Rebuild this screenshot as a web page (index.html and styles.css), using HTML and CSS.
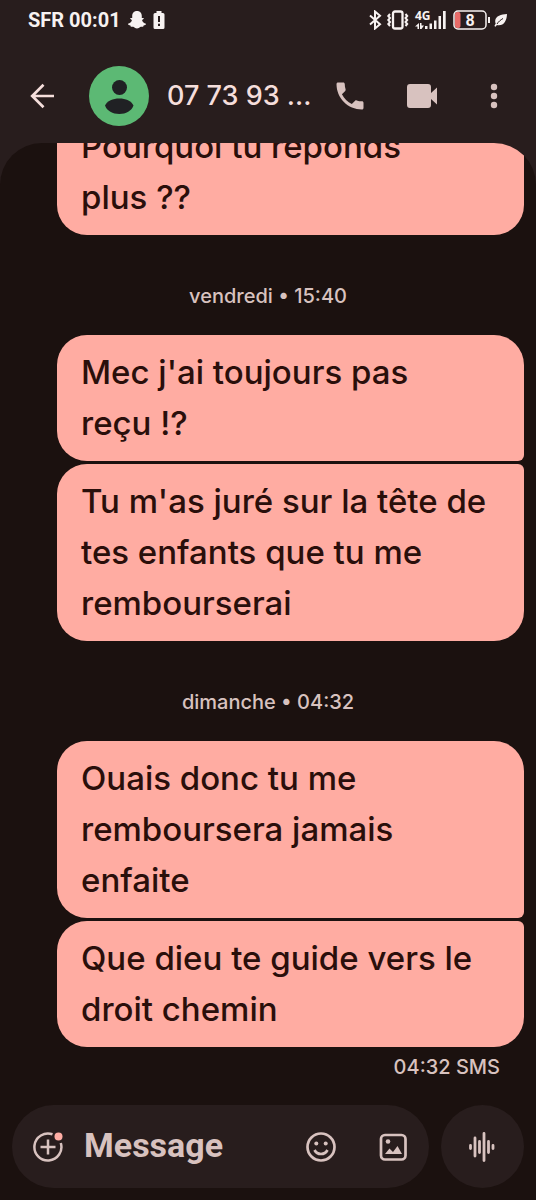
FILE: index.html
```html
<!DOCTYPE html>
<html lang="fr">
<head>
<meta charset="utf-8">
<meta name="viewport" content="width=device-width, initial-scale=1">
<title>Messages</title>
<link rel="stylesheet" href="styles.css">
</head>
<body>
<div class="app">
  <div class="status">
    <span>SFR 00:01</span>
    <svg width="20" height="20" viewBox="0 0 20 20" fill="currentColor"><path d="M10 1c3.200 0 4.800 2.200 4.800 5v2c.8 0 1.700-.3 2 .3.300.8-1.500 1.300-1.700 2 .4 1.700 2 3 3.900 3.500.2 1.200-1.500 1.300-2.400 1.600-.3.500-.2 1.300-.8 1.400-.9.100-1.700-.2-2.600.3-.9.600-1.700 1.400-3.200 1.400s-2.300-.8-3.200-1.400c-.9-.5-1.700-.2-2.600-.3-.6-.1-.5-.9-.8-1.400C2.500 15.100.8 15 1 13.800 2.900 13.300 4.500 12 4.900 10.300c-.2-.7-2-1.200-1.700-2 .3-.6 1.200-.3 2-.3V6c0-2.800 1.600-5 4.800-5z"/></svg>
    <svg width="12" height="20" viewBox="0 0 12 20"><path fill="currentColor" d="M3.500 1h5v2H10a1.500 1.500 0 0 1 1.500 1.500v13A1.500 1.500 0 0 1 10 19H2a1.500 1.500 0 0 1-1.500-1.500v-13A1.500 1.500 0 0 1 2 3h1.500z"/><path d="M6 6v6m0 1.700v2.300" stroke="#281d1d" stroke-width="2"/></svg>
    <div class="indicators">
      <svg width="14" height="20" viewBox="0 0 14 20" fill="none" stroke="currentColor" stroke-width="2"><path d="M1 5.500 11 14.200l-5 4.300v-17l5 4.300L1 14.500"/></svg>
      <svg width="24" height="20" viewBox="0 0 24 20" fill="none" stroke="currentColor"><rect x="6" y="1.500" width="9.500" height="17" rx="2" stroke-width="2.300"/><path d="M3 4 1.300 6 3 8l-1.700 2L3 12l-1.700 2L3 16M18.500 4l1.700 2-1.700 2 1.700 2-1.700 2 1.700 2-1.700 2" stroke-width="2"/></svg>
      <svg width="34" height="22" viewBox="0 0 34 22"><text class="network" x="0" y="11">4G</text><path fill="currentColor" d="M0 17.500 4 14v6H2.500v-2.500zM5 14h1.500v2.500H9L6.500 20H5zM10 17h2.500v3H10zM14.500 14.500H17V20h-2.500zM19 11.500h2.500V20H19zM23.500 7H26v13h-2.500zM28 2h2.700v18H28z"/></svg>
      <svg width="37" height="20" viewBox="0 0 37 20"><rect x="2" y="2" width="5.500" height="16" rx="2" fill="#e86b68"/><rect x="1" y="1" width="32" height="18" rx="4" fill="none" stroke="currentColor" stroke-width="1.500"/><path d="M36 7v6" stroke="currentColor" stroke-width="2"/><text class="level" x="17" y="16" text-anchor="middle">8</text></svg>
      <svg width="14" height="16" viewBox="0 0 14 16"><path fill="currentColor" d="M13 2C7 2.200 1.800 4 1.200 8.700c-.1 1 .1 2 .5 2.800L.4 14l1.200.7 1.300-1.600C9.500 14.500 12.800 9 13 2z"/><path d="M3 12c1.500-2.500 3.500-4 6-5.500" stroke="#281d1d" fill="none"/></svg>
    </div>
  </div>

  <header class="header">
    <button class="icon back" aria-label="Retour"><svg width="28" height="28" viewBox="0 0 28 28" fill="none" stroke="currentColor" stroke-width="2.700"><path d="M26 14H4M15.500 2.700 4.200 14l11.300 11.300"/></svg></button>
    <svg class="avatar" width="60" height="60" viewBox="0 0 60 60"><circle cx="30" cy="30" r="30" fill="#5cb974"/><circle cx="30.500" cy="21.500" r="7.500" fill="#202124"/><path fill="#202124" d="M16 39.500C18 35 24 32.500 30.300 32.500S42.500 35 44.500 39.500C42.500 45 37 48 30.300 48S18 45 16 39.500z"/></svg>
    <h1 class="title">07 73 93 ...</h1>
    <button class="icon" aria-label="Appeler"><svg width="36" height="36" viewBox="0 0 24 24" fill="currentColor"><path d="M6.620 10.790c1.440 2.830 3.760 5.140 6.590 6.590l2.200-2.200c.27-.27.67-.36 1.020-.24 1.120.37 2.330.57 3.570.57.55 0 1 .45 1 1V20c0 .55-.45 1-1 1-9.390 0-17-7.610-17-17 0-.55.45-1 1-1h3.500c.55 0 1 .45 1 1 0 1.250.2 2.450.57 3.570.11.35.03.74-.25 1.020l-2.200 2.200z"/></svg></button>
    <button class="icon" aria-label="Appel vidéo"><svg width="32" height="26" viewBox="0 0 32 26" fill="currentColor"><path d="M4 1h18a3 3 0 0 1 3 3v6l6-5.500v17L25 16v6a3 3 0 0 1-3 3H4a3 3 0 0 1-3-3V4a3 3 0 0 1 3-3z"/></svg></button>
    <button class="icon" aria-label="Plus d'options"><svg width="8" height="26" viewBox="0 0 8 26" fill="currentColor"><circle cx="4" cy="4" r="3.200"/><circle cx="4" cy="13" r="3.200"/><circle cx="4" cy="22" r="3.200"/></svg></button>
  </header>

  <main class="chat">
    <p class="bubble last">Pourquoi tu réponds plus&nbsp;??</p>
    <p class="date">vendredi • 15:40</p>
    <p class="bubble first">Mec j'ai toujours pas reçu&nbsp;!?</p>
    <p class="bubble last">Tu m'as juré sur la tête de tes enfants que tu me rembourserai</p>
    <p class="date">dimanche • 04:32</p>
    <p class="bubble first">Ouais donc tu me remboursera jamais enfaite</p>
    <p class="bubble last">Que dieu te guide vers le droit chemin</p>
    <p class="sent">04:32 SMS</p>
  </main>

  <form class="composer">
    <div class="field">
      <button type="button" class="icon" aria-label="Ajouter"><svg width="32" height="32" viewBox="0 0 32 32" fill="none" stroke="currentColor" stroke-width="2.500"><path d="M20.500 3.300A13.500 13.500 0 1 0 28.800 12M16 8.500v15M8.500 16h15"/><circle cx="26.500" cy="5.500" r="4" fill="#ffaea5" stroke="none"/></svg></button>
      <input class="input" type="text" aria-label="Message" placeholder="Message">
      <button type="button" class="icon" aria-label="Émoticônes"><svg width="32" height="32" viewBox="0 0 32 32" fill="none" stroke="currentColor" stroke-width="2.700"><circle cx="16" cy="16" r="13.500"/><circle cx="11.300" cy="12.500" r="2" fill="currentColor" stroke="none"/><circle cx="20.700" cy="12.500" r="2" fill="currentColor" stroke="none"/><path d="M9.500 19c2.800 5.300 10.200 5.300 13 0"/></svg></button>
      <button type="button" class="icon" aria-label="Galerie"><svg width="32" height="32" viewBox="0 0 32 32"><rect x="4" y="4" width="24.500" height="24.500" rx="4" fill="none" stroke="currentColor" stroke-width="2.700"/><circle cx="11" cy="10.500" r="2.300" fill="currentColor"/><path fill="currentColor" d="m8 23 4.500-5.500 3.500 3.500 4.500-6L25 23z"/></svg></button>
    </div>
    <button type="button" class="voice" aria-label="Message vocal"><svg width="30" height="32" viewBox="0 0 30 32" fill="none" stroke="currentColor" stroke-width="2.800" stroke-linecap="round"><path d="M2.500 14.500v3M7 7v18M11.500 10.500v11M16 2.500v27M20.500 10.500v11M25 14.500v3"/></svg></button>
  </form>
</div>
</body>
</html>
```
FILE: styles.css
```css
* {
  box-sizing: border-box;
}

body {
  margin: 0;
  background: #1b110f;
  font-family: Inter, Roboto, sans-serif;
  color: #d8c2bf;
}

.app {
  display: flex;
  flex-direction: column;
  height: 100vh;
  background: #281d1d;
}

svg {
  display: block;
  flex: none;
}

button {
  border: 0;
  padding: 0;
  background: none;
  color: inherit;
}

.status {
  display: flex;
  align-items: center;
  gap: 6px;
  height: 40px;
  padding: 0 28px;
  color: #f7f2f1;
  font: 700 20px Roboto, sans-serif;
}

.indicators {
  display: flex;
  align-items: center;
  gap: 4px;
  margin-left: auto;
}

.network {
  fill: currentColor;
  font: 700 12px "Open Sans", sans-serif;
}

.level {
  fill: currentColor;
  font: 700 16px Roboto, sans-serif;
}

svg:has(.network) {
  overflow: visible;
}

.header {
  display: flex;
  align-items: center;
  height: 103px;
  padding: 8px 6px 0;
}

.icon {
  display: flex;
  flex: none;
  align-items: center;
  justify-content: center;
  width: 72px;
  height: 72px;
}

.back {
  color: #f5dedb;
}

.avatar {
  margin: 0 18px 0 11px;
}

.title {
  flex: 1;
  margin: 0;
  color: #f5dedb;
  font-size: 27px;
  font-weight: 500;
  white-space: nowrap;
}

.chat {
  display: flex;
  flex: 1;
  flex-direction: column;
  justify-content: flex-end;
  min-height: 0;
  overflow: hidden;
  padding: 0 12px 0 57px;
  border-radius: 42px 42px 0 0;
  background: #1b110f;
}

.chat p {
  flex: none;
  margin: 0;
}

.chat .bubble {
  padding: 12px 24px;
  border-radius: 30px;
  background: #ffaca2;
  color: #2a0f0b;
  font-size: 33px;
  font-weight: 450;
  line-height: 51px;
}

.chat .first {
  margin-bottom: 3px;
  border-bottom-right-radius: 6px;
}

.chat .first + .last {
  border-top-right-radius: 6px;
}

.chat .date {
  margin-left: -45px;
  padding: 46px 0 24px;
  font-size: 20px;
  font-weight: 450;
  line-height: 30px;
  text-align: center;
}

.chat .sent {
  padding: 5px 24px 23px;
  font-size: 20px;
  font-weight: 450;
  line-height: 30px;
  text-align: right;
}

.composer {
  display: flex;
  gap: 12px;
  padding: 0 12px 12px;
  background: #1b110f;
}

.field {
  display: flex;
  flex: 1;
  align-items: center;
  min-width: 0;
  height: 83px;
  border-radius: 42px;
  background: #281d1d;
}

.input {
  flex: 1;
  min-width: 0;
  padding: 0 0 4px;
  border: 0;
  outline: 0;
  background: none;
  color: inherit;
  font: 700 34px Roboto, sans-serif;
}

.input::placeholder {
  color: inherit;
  opacity: 1;
}

.voice {
  display: flex;
  align-items: center;
  justify-content: center;
  width: 83px;
  height: 83px;
  border-radius: 50%;
  background: #281d1d;
}
```
